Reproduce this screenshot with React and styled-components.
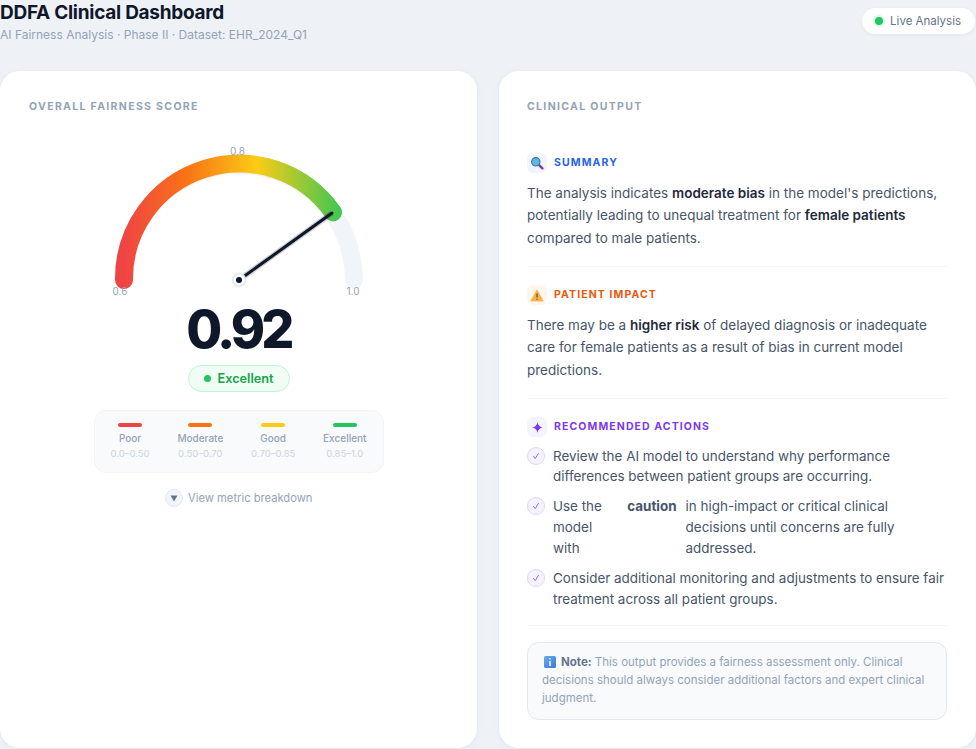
import styled, { createGlobalStyle } from 'styled-components';

const GlobalStyle = createGlobalStyle`
  * { box-sizing: border-box; }
  html, body { margin: 0; padding: 0; }
  body {
    background: #eef2f7;
    font-family: Inter, "Noto Sans", sans-serif;
    color: #0f172a;
    overflow: hidden;
  }
`;

const Page = styled.div`
  width: 976px;
  height: 749px;
`;

const Header = styled.header`
  height: 71px;
  display: flex;
  justify-content: space-between;
  align-items: flex-start;
`;

const Title = styled.h1`
  margin: 1px 0 0;
  font-size: 19px;
  line-height: 24px;
  font-weight: 700;
  letter-spacing: -0.27px;
  color: #0f172a;
`;

const Subtitle = styled.p`
  margin: 1px 0 0;
  font-size: 12px;
  line-height: 18px;
  color: #94a3b8;
`;

const LivePill = styled.div`
  margin-top: 8px;
  margin-right: 1px;
  height: 26px;
  padding: 0 14px 0 13px;
  display: flex;
  align-items: center;
  gap: 7px;
  background: #fff;
  border-radius: 13px;
  font-size: 11.5px;
  color: #64748b;
  box-shadow: 0 1px 4px rgba(15, 23, 42, 0.06);
`;

const LiveDot = styled.span`
  width: 8px;
  height: 8px;
  border-radius: 50%;
  background: #22c55e;
  box-shadow: 0 0 0 2px #dcfce7;
`;

const Columns = styled.div`
  display: grid;
  grid-template-columns: 477px 477px;
  gap: 22px;
`;

const Card = styled.section`
  background: #fff;
  border-radius: 20px;
  padding: 29px 29px 28px ${p => p.$left || 28}px;
  box-shadow: 0 1px 6px rgba(15, 23, 42, 0.05);
`;

const CardLabel = styled.h2`
  margin: 0;
  font-size: 10.5px;
  line-height: 13px;
  font-weight: 700;
  letter-spacing: 1.33px;
  color: #94a3b8;
  text-transform: uppercase;
`;

const GaugeColumn = styled.div`
  display: flex;
  flex-direction: column;
  align-items: center;
`;

const GaugeSvg = styled.svg`
  display: block;
  margin-top: 32px;
`;

const GaugeText = styled.text`
  font-family: Inter, sans-serif;
  font-size: 10px;
  fill: #94a3b8;
`;

const Score = styled.div`
  margin-top: -3px;
  font-size: 52px;
  line-height: 56px;
  font-weight: 800;
  letter-spacing: -3.8px;
  color: #0f172a;
`;

const Badge = styled.div`
  margin-top: 7px;
  height: 27px;
  width: 102px;
  display: flex;
  align-items: center;
  justify-content: center;
  gap: 7px;
  border-radius: 14px;
  background: #f0fdf4;
  border: 1px solid #bbf7d0;
  color: #16a34a;
  font-size: 12.7px;
  font-weight: 600;
`;

const BadgeDot = styled.span`
  width: 7px;
  height: 7px;
  border-radius: 50%;
  background: #22c55e;
`;

const Legend = styled.div`
  margin-top: 18px;
  width: 290px;
  height: 63px;
  padding: 12px 16px 0;
  display: flex;
  justify-content: space-between;
  background: #f8fafc;
  border: 1px solid #f1f5f9;
  border-radius: 12px;
`;

const LegendItem = styled.div`
  display: flex;
  flex-direction: column;
  align-items: center;
`;

const LegendBar = styled.span`
  width: 24px;
  height: 4px;
  border-radius: 2px;
  background: ${p => p.$color};
`;

const LegendName = styled.span`
  margin-top: 4px;
  font-size: 10px;
  line-height: 14px;
  font-weight: 500;
  color: #94a3b8;
`;

const LegendRange = styled.span`
  margin-top: 2px;
  font-size: 9.5px;
  line-height: 14px;
  color: #cbd5e1;
`;

const Breakdown = styled.div`
  margin-top: 16px;
  display: flex;
  align-items: center;
  gap: 5.5px;
  font-size: 11.2px;
  color: #94a3b8;
`;

const BreakdownIcon = styled.span`
  width: 18px;
  height: 18px;
  border-radius: 50%;
  background: #f1f5f9;
  border: 1px solid #e2e8f0;
  display: flex;
  align-items: center;
  justify-content: center;
`;

const Blocks = styled.div`
  margin-top: 22px;
`;

const Block = styled.div`
  padding: 18px 0 16.8px;
  border-bottom: 1px solid #f1f5f9;

  &:last-child {
    padding-bottom: 15.4px;
  }
`;

const BlockHead = styled.div`
  display: flex;
  align-items: center;
  gap: 7px;
  font-size: 10.5px;
  line-height: 20px;
  font-weight: 700;
  letter-spacing: 1.1px;
  text-transform: uppercase;
  color: ${p => p.$color};
`;

const IconTile = styled.span`
  width: 20px;
  height: 20px;
  border-radius: 6px;
  display: flex;
  align-items: center;
  justify-content: center;
  background: ${p => p.$bg};
`;

const BlockText = styled.p`
  margin: 9px 0 0;
  font-size: 13.5px;
  line-height: 22.4px;
  color: #475569;

  strong {
    font-weight: 600;
    color: #1e293b;
  }
`;

const Actions = styled.ul`
  list-style: none;
  margin: 8.5px 0 0;
  padding: 0;
  display: flex;
  flex-direction: column;
  gap: 9px;
`;

const Action = styled.li`
  display: flex;
  gap: 9px;
  font-size: 13.45px;
  line-height: 20.925px;
  color: #475569;

  strong {
    font-weight: 700;
    color: #475569;
  }
`;

const Check = styled.span`
  flex: 0 0 18px;
  width: 18px;
  height: 18px;
  margin: 1px -1px 0 0;
  border-radius: 50%;
  background: #f5f3ff;
  border: 1px solid #ddd6fe;
  display: flex;
  align-items: center;
  justify-content: center;
`;

const Note = styled.div`
  margin-top: 16px;
  padding: 10px 14px 12px 14px;
  background: #f8fafc;
  border: 1px solid #e2e8f0;
  border-radius: 12px;
  font-size: 11.5px;
  line-height: 18px;
  color: #94a3b8;

  strong {
    font-weight: 700;
    color: #64748b;
  }
`;

const InfoMark = styled.svg`
  display: inline-block;
  vertical-align: -2px;
  margin: 0 5px 0 2px;
`;

const legend = [
  ['Poor', '0.0–0.50', '#ef4444'],
  ['Moderate', '0.50–0.70', '#f97316'],
  ['Good', '0.70–0.85', '#facc15'],
  ['Excellent', '0.85–1.0', '#22c55e'],
];

function Gauge() {
  return (
    <GaugeSvg width="260" height="160" viewBox="0 0 260 160">
      <defs>
        <linearGradient id="arc" gradientUnits="userSpaceOnUse" x1="15" y1="0" x2="245" y2="0">
          <stop offset="0" stopColor="#ef4444" />
          <stop offset="0.27" stopColor="#f97316" />
          <stop offset="0.58" stopColor="#facc15" />
          <stop offset="1" stopColor="#22c55e" />
        </linearGradient>
        <linearGradient id="info" x1="0" y1="0" x2="1" y2="1">
          <stop offset="0" stopColor="#6aa9ee" />
          <stop offset="1" stopColor="#3b7dd8" />
        </linearGradient>
      </defs>
      <path d="M15 135 A115 115 0 0 1 245 135" fill="none" stroke="#f1f5f9" strokeWidth="18" strokeLinecap="round" />
      <path d="M15 135 A115 115 0 0 1 224 67.4" fill="none" stroke="url(#arc)" strokeWidth="18" strokeLinecap="round" />
      <line x1="130" y1="135" x2="223" y2="68" stroke="#0f172a" strokeOpacity="0.22" strokeWidth="5.5" />
      <line x1="130" y1="135" x2="223" y2="68" stroke="#0f172a" strokeWidth="3" strokeLinecap="round" />
      <circle cx="130" cy="135" r="6.5" fill="#fff" stroke="#e2e8f0" strokeWidth="1.5" />
      <circle cx="130" cy="135" r="3" fill="#0f172a" />
      <GaugeText x="128.5" y="10" textAnchor="middle">0.8</GaugeText>
      <GaugeText x="11" y="150" textAnchor="middle">0.6</GaugeText>
      <GaugeText x="244" y="150" textAnchor="middle">1.0</GaugeText>
    </GaugeSvg>
  );
}

const CheckIcon = () => (
  <Check>
    <svg width="10" height="10" viewBox="0 0 10 10">
      <path d="M2.6 5.4 L4.2 7.6 L7.4 2.4" fill="none" stroke="#8b5cf6" strokeWidth="0.9" strokeLinecap="round" strokeLinejoin="round" />
    </svg>
  </Check>
);

export default function App() {
  return (
    <Page>
      <GlobalStyle />
      <Header>
        <div>
          <Title>DDFA Clinical Dashboard</Title>
          <Subtitle>AI Fairness Analysis · Phase II · Dataset: EHR_2024_Q1</Subtitle>
        </div>
        <LivePill>
          <LiveDot />
          Live Analysis
        </LivePill>
      </Header>
      <Columns>
        <Card $left={29}>
          <CardLabel>Overall Fairness Score</CardLabel>
          <GaugeColumn>
            <Gauge />
            <Score>0.92</Score>
            <Badge>
              <BadgeDot />
              Excellent
            </Badge>
            <Legend>
              {legend.map(([name, range, color]) => (
                <LegendItem key={name}>
                  <LegendBar $color={color} />
                  <LegendName>{name}</LegendName>
                  <LegendRange>{range}</LegendRange>
                </LegendItem>
              ))}
            </Legend>
            <Breakdown>
              <BreakdownIcon>
                <svg width="8" height="7" viewBox="0 0 8 7">
                  <path d="M0.5 0.5 H7.5 L4 6.5 Z" fill="#64748b" />
                </svg>
              </BreakdownIcon>
              View metric breakdown
            </Breakdown>
          </GaugeColumn>
        </Card>
        <Card>
          <CardLabel>Clinical Output</CardLabel>
          <Blocks>
            <Block>
              <BlockHead $color="#2563eb">
                <IconTile $bg="#eff6ff">
                  <svg width="14" height="14" viewBox="0 0 14 14">
                    <path d="M8.6 8.6 L12.4 12.4" stroke="#7e3f98" strokeWidth="2.4" strokeLinecap="round" />
                    <circle cx="5.8" cy="5.8" r="4.2" fill="#5bb8e8" stroke="#4a6f8f" strokeWidth="1.1" />
                  </svg>
                </IconTile>
                Summary
              </BlockHead>
              <BlockText>
                The analysis indicates <strong>moderate bias</strong> in the model's predictions, potentially leading to unequal treatment for <strong>female patients</strong> compared to male patients.
              </BlockText>
            </Block>
            <Block>
              <BlockHead $color="#ea580c">
                <IconTile $bg="#fff7ed">
                  <svg width="14" height="13" viewBox="0 0 14 13">
                    <path d="M7 1 L13.2 12 H0.8 Z" fill="#f9b04a" stroke="#f9b04a" strokeWidth="0.8" strokeLinejoin="round" />
                    <path d="M7 4.6 V8.4 M7 9.7 V10.7" stroke="#5b4636" strokeWidth="1.1" />
                  </svg>
                </IconTile>
                Patient Impact
              </BlockHead>
              <BlockText>
                There may be a <strong>higher risk</strong> of delayed diagnosis or inadequate care for female patients as a result of bias in current model predictions.
              </BlockText>
            </Block>
            <Block>
              <BlockHead $color="#7c3aed">
                <IconTile $bg="#f5f3ff">
                  <svg width="11" height="11" viewBox="0 0 10 10">
                    <path d="M5 0 Q5.6 4.4 10 5 Q5.6 5.6 5 10 Q4.4 5.6 0 5 Q4.4 4.4 5 0 Z" fill="#7c3aed" />
                  </svg>
                </IconTile>
                Recommended Actions
              </BlockHead>
              <Actions>
                <Action>
                  <CheckIcon />
                  Review the AI model to understand why performance differences between patient groups are occurring.
                </Action>
                <Action>
                  <CheckIcon />
                  Use the model with <strong>caution</strong> in high-impact or critical clinical decisions until concerns are fully addressed.
                </Action>
                <Action>
                  <CheckIcon />
                  Consider additional monitoring and adjustments to ensure fair treatment across all patient groups.
                </Action>
              </Actions>
            </Block>
          </Blocks>
          <Note>
            <InfoMark width="12" height="12" viewBox="0 0 12 12">
              <rect width="12" height="12" rx="1.5" fill="url(#info)" />
              <path d="M6 2.2 V3.5 M6 5 V10" stroke="#fff" strokeWidth="1.5" />
            </InfoMark>
            <strong>Note:</strong> This output provides a fairness assessment only. Clinical decisions should always consider additional factors and expert clinical judgment.
          </Note>
        </Card>
      </Columns>
    </Page>
  );
}
